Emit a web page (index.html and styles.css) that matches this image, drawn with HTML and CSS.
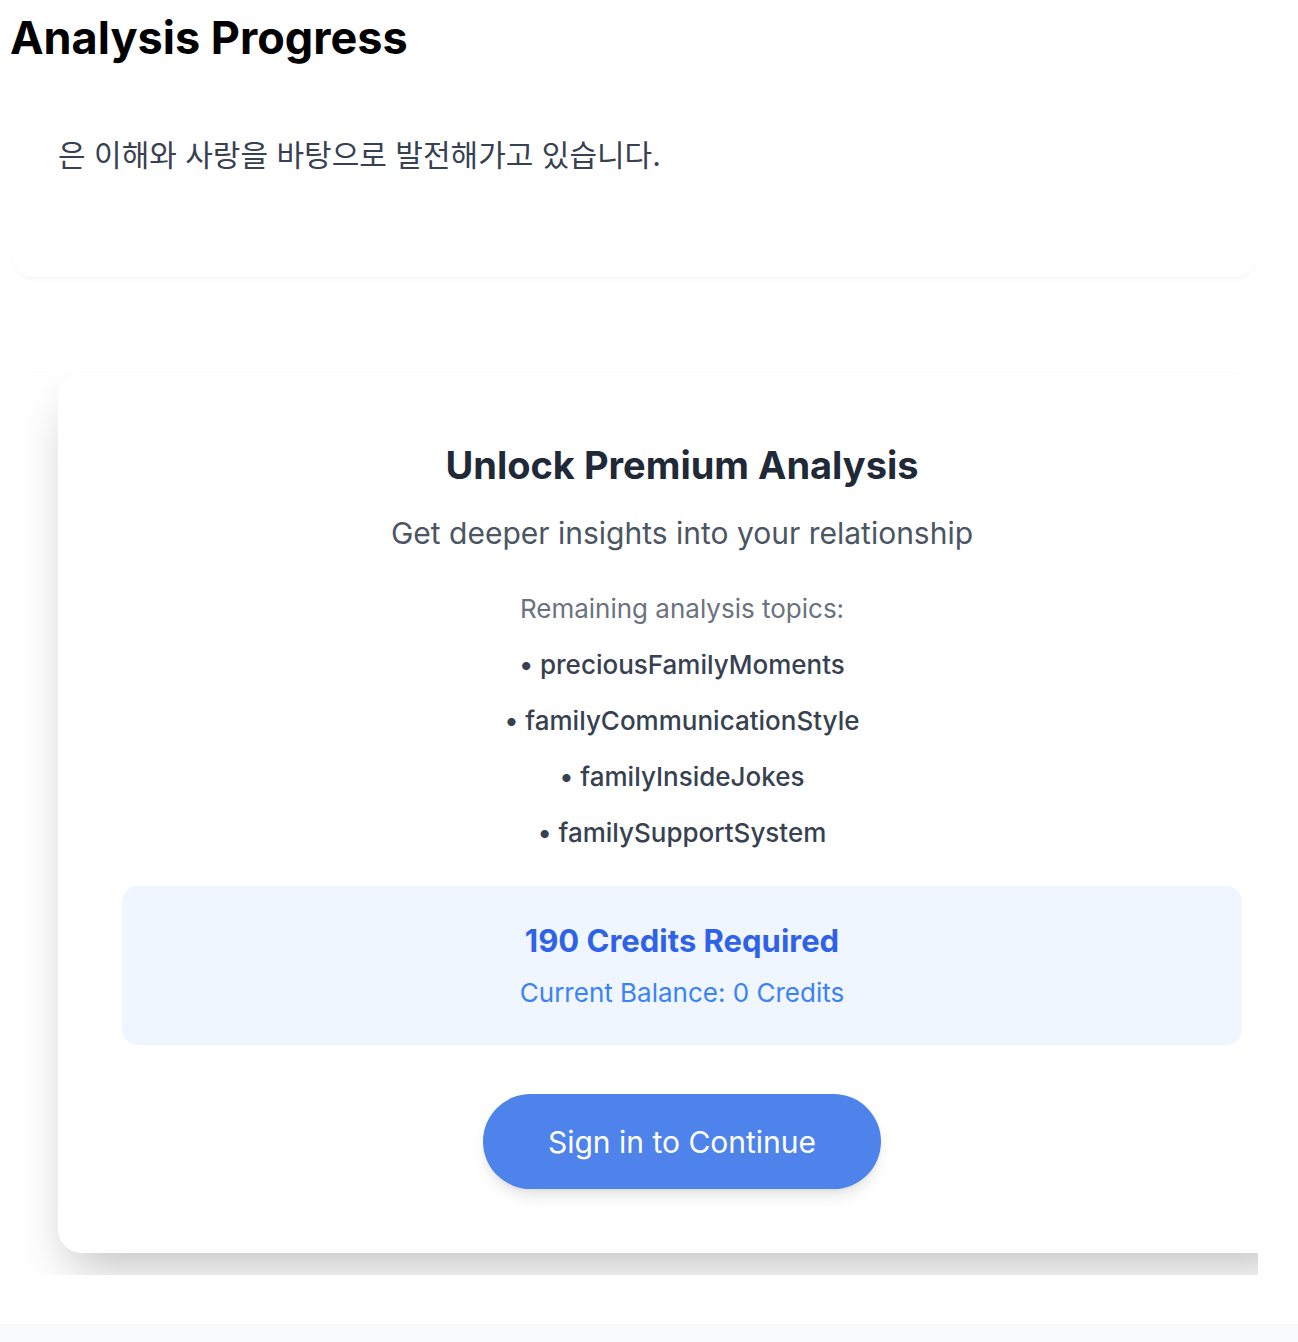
FILE: index.html
```html
<!DOCTYPE html>
<html lang="ko">
<head>
<meta charset="utf-8">
<title>Analysis Progress</title>
<link rel="stylesheet" href="styles.css">
</head>
<body>
<div class="page">
  <h1 class="page-title">Analysis Progress</h1>
  <section class="summary-card">
    <p class="summary-text">은 이해와 사랑을 바탕으로 발전해가고 있습니다.</p>
  </section>
  <section class="premium-viewport">
    <div class="premium-track">
      <div class="premium-card">
        <h2 class="premium-title">Unlock Premium Analysis</h2>
        <p class="premium-subtitle">Get deeper insights into your relationship</p>
        <p class="topics-label">Remaining analysis topics:</p>
        <ul class="topic-list">
          <li>• preciousFamilyMoments</li>
          <li>• familyCommunicationStyle</li>
          <li>• familyInsideJokes</li>
          <li>• familySupportSystem</li>
        </ul>
        <div class="credits-box">
          <p class="credits-required">190 Credits Required</p>
          <p class="credits-balance">Current Balance: 0 Credits</p>
        </div>
        <div class="cta-row">
          <button class="cta-button" type="button">Sign in to Continue</button>
        </div>
      </div>
    </div>
  </section>
</div>
<div class="page-footer"></div>
</body>
</html>
```
FILE: styles.css
```css
html, body {
  margin: 0;
  padding: 0;
}
body {
  background: #f9fafb;
  font-family: Inter, "Noto Sans CJK KR", sans-serif;
  color: #111827;
}
.page {
  background: #ffffff;
  padding: 0 40px 49px 10px;
}
.page-title {
  margin: 0;
  padding-top: 12px;
  font-size: 45px;
  line-height: 52px;
  font-weight: 700;
  color: #000000;
}
.summary-card {
  background: #ffffff;
  border-radius: 24px;
  box-shadow: 0 4px 6px -3px rgba(0, 0, 0, 0.05), 0 1px 2px -1px rgba(0, 0, 0, 0.03);
  padding: 71px 48px 102px;
}
.summary-text {
  margin: 0;
  font-family: Inter, "Noto Sans CJK KR", sans-serif;
  font-size: 30px;
  line-height: 40px;
  color: #374151;
}
.premium-viewport {
  margin-top: 96px;
  border-radius: 24px 24px 0 0;
  overflow: hidden;
  box-shadow: 0 -1px 2px rgba(0, 0, 0, 0.02);
}
.premium-track {
  display: flex;
  padding: 0 0 22px 48px;
}
.premium-card {
  flex: 0 0 1248px;
  box-sizing: border-box;
  background: #ffffff;
  border-radius: 24px;
  box-shadow: 0 25px 50px -12px rgba(0, 0, 0, 0.25);
  padding: 70px 64px 64px;
  text-align: center;
}
.premium-title {
  margin: 0;
  font-size: 38px;
  line-height: 44px;
  font-weight: 700;
  color: #1f2937;
}
.premium-subtitle {
  margin: 28px 0 0;
  font-size: 30px;
  line-height: 36px;
  color: #4b5563;
}
.topics-label {
  margin: 42px 0 0;
  font-size: 26px;
  line-height: 32px;
  color: #6b7280;
}
.topic-list {
  list-style: none;
  margin: 24px 0 0;
  padding: 0;
  display: flex;
  flex-direction: column;
  gap: 24px;
}
.topic-list li {
  font-size: 26px;
  line-height: 32px;
  font-weight: 500;
  color: #374151;
}
.credits-box {
  margin-top: 37px;
  background: #eff6ff;
  border-radius: 16px;
  padding: 37px 32px 36px;
}
.credits-required {
  margin: 0;
  font-size: 31px;
  line-height: 36px;
  font-weight: 700;
  color: #2f62e6;
}
.credits-balance {
  margin: 18px 0 0;
  font-size: 26px;
  line-height: 32px;
  color: #3b82f6;
}
.cta-row {
  margin-top: 49px;
  display: flex;
  justify-content: center;
}
.cta-button {
  font-family: Inter, sans-serif;
  font-size: 30px;
  line-height: 36px;
  color: #ffffff;
  background: #4f83ec;
  border: none;
  border-radius: 9999px;
  padding: 30px 65px 29px;
  box-shadow: 0 10px 15px -3px rgba(0, 0, 0, 0.1), 0 4px 6px -4px rgba(0, 0, 0, 0.1);
  cursor: pointer;
}
.page-footer {
  height: 40px;
  background: #f9fafb;
}
```
